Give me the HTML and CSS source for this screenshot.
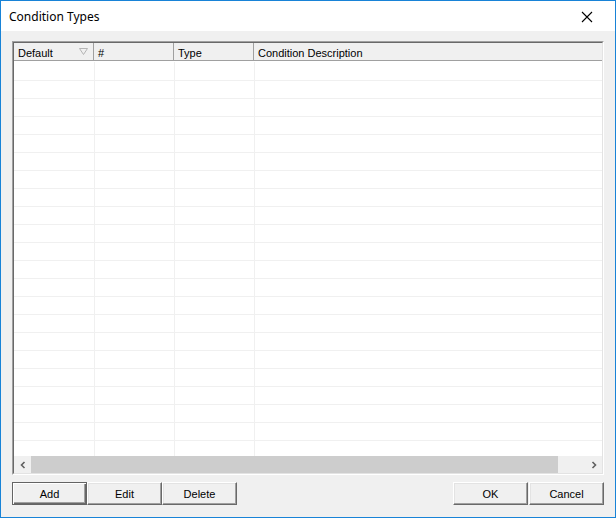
FILE: index.html
```html
<!DOCTYPE html>
<html lang="en">
<head>
  <meta charset="UTF-8" />
  <title>Condition Types</title>
  <link rel="stylesheet" href="styles.css">
</head>
<body>
  <div class="window">
    <!-- Title bar -->
    <div class="titlebar">
      <span class="title">Condition Types</span>
      <button class="close-btn" aria-label="Close">
        <svg width="12" height="12" viewBox="0 0 12 12">
          <path d="M1 1 L11 11 M11 1 L1 11" stroke="#000" stroke-width="1.1" fill="none"/>
        </svg>
      </button>
    </div>

    <div class="content">
      <!-- List view -->
      <div class="list-outer">
        <div class="list-inner">
          <div class="list-header">
            <div class="col col-default">Default
              <svg class="sort-icon" width="9" height="7" viewBox="0 0 9 7">
                <path d="M0.5 0.5 L8.5 0.5 L4.5 6.5 Z" stroke="#b4b4b4" fill="none"/>
              </svg>
            </div>
            <div class="col col-num">#</div>
            <div class="col col-type">Type</div>
            <div class="col col-desc">Condition Description</div>
          </div>

          <div class="list-body">
            <table class="grid">
              <tr><td></td><td></td><td></td><td></td></tr>
              <tr><td></td><td></td><td></td><td></td></tr>
              <tr><td></td><td></td><td></td><td></td></tr>
              <tr><td></td><td></td><td></td><td></td></tr>
              <tr><td></td><td></td><td></td><td></td></tr>
              <tr><td></td><td></td><td></td><td></td></tr>
              <tr><td></td><td></td><td></td><td></td></tr>
              <tr><td></td><td></td><td></td><td></td></tr>
              <tr><td></td><td></td><td></td><td></td></tr>
              <tr><td></td><td></td><td></td><td></td></tr>
              <tr><td></td><td></td><td></td><td></td></tr>
              <tr><td></td><td></td><td></td><td></td></tr>
              <tr><td></td><td></td><td></td><td></td></tr>
              <tr><td></td><td></td><td></td><td></td></tr>
              <tr><td></td><td></td><td></td><td></td></tr>
              <tr><td></td><td></td><td></td><td></td></tr>
              <tr><td></td><td></td><td></td><td></td></tr>
              <tr><td></td><td></td><td></td><td></td></tr>
              <tr><td></td><td></td><td></td><td></td></tr>
              <tr><td></td><td></td><td></td><td></td></tr>
              <tr><td></td><td></td><td></td><td></td></tr>
              <tr><td></td><td></td><td></td><td></td></tr>
            </table>
          </div>

          <!-- Horizontal scrollbar -->
          <div class="hscroll">
            <div class="scroll-arrow">
              <svg width="8" height="8" viewBox="0 0 8 8">
                <path d="M5.5 1 L2.5 4 L5.5 7" stroke="#606060" stroke-width="1.6" fill="none"/>
              </svg>
            </div>
            <div class="scroll-track">
              <div class="scroll-thumb"></div>
            </div>
            <div class="scroll-arrow">
              <svg width="8" height="8" viewBox="0 0 8 8">
                <path d="M2.5 1 L5.5 4 L2.5 7" stroke="#606060" stroke-width="1.6" fill="none"/>
              </svg>
            </div>
          </div>
        </div>
      </div>

      <!-- Buttons -->
      <div class="button-row">
        <div class="button-group">
          <button class="btn btn-default">Add</button>
          <button class="btn">Edit</button>
          <button class="btn">Delete</button>
        </div>
        <div class="button-group gap">
          <button class="btn">OK</button>
          <button class="btn">Cancel</button>
        </div>
      </div>
    </div>
  </div>
</body>
</html>
```

FILE: styles.css
```css
* {
  margin: 0;
  padding: 0;
  box-sizing: border-box;
}

body {
  background-color: #f0f0f0;
  font-family: 'Liberation Sans', Arial, sans-serif;
  font-size: 11px;
  color: #000;
}

.window {
  width: 616px;
  height: 518px;
  border: 1px solid #1883d7;
  background-color: #f0f0f0;
}

.titlebar {
  height: 30px;
  background-color: #fff;
  display: flex;
  justify-content: space-between;
  align-items: center;
  padding-left: 8px;
}

.title {
  font-family: 'Noto Sans', 'Open Sans', sans-serif;
  font-size: 12px;
  margin-top: 1px;
}

.close-btn {
  width: 46px;
  height: 30px;
  border: none;
  background: transparent;
  display: flex;
  align-items: center;
  justify-content: center;
  padding-right: 10px;
  margin-top: 1px;
}

.content {
  padding: 10px 11px 0 11px;
}

/* list view with sunken border */
.list-outer {
  height: 434px;
  border: 1px solid;
  border-color: #a0a0a0 #fff #fff #a0a0a0;
}

.list-inner {
  height: 100%;
  border: 1px solid;
  border-color: #696969 #e3e3e3 #e3e3e3 #696969;
  background-color: #fff;
  display: flex;
  flex-direction: column;
}

.list-header {
  display: flex;
  height: 18px;
  background-color: #f0f0f0;
  border-bottom: 1px solid #a0a0a0;
}

.col {
  display: flex;
  align-items: center;
  padding: 2px 0 0 4px;
  border-right: 1px solid #a0a0a0;
  position: relative;
}

.col-default,
.col-num,
.col-type {
  width: 80px;
}

.col-desc {
  flex: 1;
  border-right: none;
}

.sort-icon {
  position: absolute;
  right: 5px;
  top: 5px;
}

.list-body {
  flex: 1;
  overflow: hidden;
  padding-top: 1px;
}

.grid {
  border-collapse: collapse;
  width: 100%;
}

.grid td {
  height: 18px;
  border-bottom: 1px solid #f0f0f0;
  border-right: 1px solid #f0f0f0;
}

.grid td:nth-child(1),
.grid td:nth-child(2),
.grid td:nth-child(3) {
  width: 80px;
}

.grid td:last-child {
  border-right: none;
}

.hscroll {
  height: 17px;
  display: flex;
  background-color: #f0f0f0;
}

.scroll-arrow {
  width: 17px;
  display: flex;
  align-items: center;
  justify-content: center;
}

.scroll-track {
  flex: 1;
  padding-right: 27px;
}

.scroll-thumb {
  height: 100%;
  background-color: #cdcdcd;
}

/* buttons */
.button-row {
  display: flex;
  justify-content: space-between;
  margin-top: 7px;
}

.button-group {
  display: flex;
}

.button-group.gap {
  gap: 1px;
}

.btn {
  width: 75px;
  height: 23px;
  font-family: 'Liberation Sans', Arial, sans-serif;
  font-size: 11px;
  color: #000;
  background-color: #f0f0f0;
  border: 1px solid;
  border-color: #fff #696969 #696969 #fff;
  box-shadow: inset -1px -1px #a0a0a0, inset 1px 1px #e3e3e3;
}

.btn-default {
  border: 1px solid #646464;
  box-shadow: inset 1px 1px #fff, inset -1px -1px #696969, inset -2px -2px #a0a0a0;
}
```
